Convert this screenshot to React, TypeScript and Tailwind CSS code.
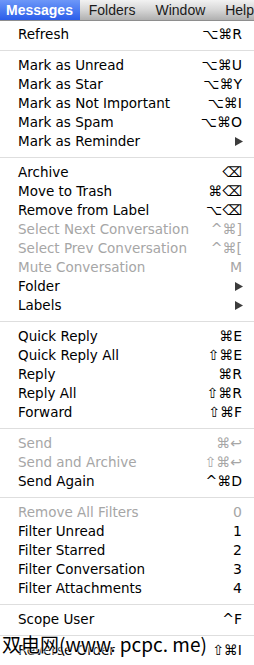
import React from "react";

type Item =
  | { sep: true }
  | { label: string; sc?: string; sub?: boolean; dis?: boolean; sep?: false };

const items: Item[] = [
  { label: "Refresh", sc: "⌥⌘R" },
  { sep: true },
  { label: "Mark as Unread", sc: "⌥⌘U" },
  { label: "Mark as Star", sc: "⌥⌘Y" },
  { label: "Mark as Not Important", sc: "⌥⌘I" },
  { label: "Mark as Spam", sc: "⌥⌘O" },
  { label: "Mark as Reminder", sub: true },
  { sep: true },
  { label: "Archive", sc: "⌫" },
  { label: "Move to Trash", sc: "⌘⌫" },
  { label: "Remove from Label", sc: "⌥⌫" },
  { label: "Select Next Conversation", sc: "^⌘]", dis: true },
  { label: "Select Prev Conversation", sc: "^⌘[", dis: true },
  { label: "Mute Conversation", sc: "M", dis: true },
  { label: "Folder", sub: true },
  { label: "Labels", sub: true },
  { sep: true },
  { label: "Quick Reply", sc: "⌘E" },
  { label: "Quick Reply All", sc: "⇧⌘E" },
  { label: "Reply", sc: "⌘R" },
  { label: "Reply All", sc: "⇧⌘R" },
  { label: "Forward", sc: "⇧⌘F" },
  { sep: true },
  { label: "Send", sc: "⌘↩", dis: true },
  { label: "Send and Archive", sc: "⇧⌘↩", dis: true },
  { label: "Send Again", sc: "^⌘D" },
  { sep: true },
  { label: "Remove All Filters", sc: "0", dis: true },
  { label: "Filter Unread", sc: "1" },
  { label: "Filter Starred", sc: "2" },
  { label: "Filter Conversation", sc: "3" },
  { label: "Filter Attachments", sc: "4" },
  { sep: true },
  { label: "Scope User", sc: "^F" },
  { sep: true },
  { label: "Reverse Order", sc: "⇧⌘I" },
];

export default function App() {
  return (
    <div
      className="relative w-[254px] h-[665px] overflow-hidden bg-white"
      style={{ fontFamily: '"DejaVu Sans", "Liberation Sans", sans-serif' }}
    >
      <div
        className="flex h-[21px] items-center bg-gradient-to-b from-[#f2f2f2] via-[#d6d6d6] to-[#b0b0b0] border-b border-[#8e8e8e] text-[14px] text-[#1a1a1a] whitespace-nowrap"
        style={{ fontFamily: '"Liberation Sans", Arial, sans-serif' }}
      >
        <div className="h-full flex items-center px-[6px] w-[81px] bg-gradient-to-b from-[#6d97f8] to-[#2b5ce9] text-white font-bold">
          Messages
        </div>
        <div className="pl-[9px] w-[77px]">Folders</div>
        <div className="w-[71px]">Window</div>
        <div>Help</div>
      </div>
      <div className="pt-[4px] text-[13.5px]">
        {items.map((it, i) =>
          it.sep ? (
            <div key={i} className="h-[12px] flex items-center">
              <div className="w-full h-px bg-[#dedede]" />
            </div>
          ) : (
            <div
              key={i}
              className={`h-[19px] flex items-center justify-between pl-[18px] pr-[10px] whitespace-nowrap ${
                it.dis ? "text-[#a6a6a6]" : "text-black"
              }`}
            >
              <span>{it.label}</span>
              {it.sub ? (
                <svg width="8" height="9" viewBox="0 0 8 9" className="mr-[1px]">
                  <polygon points="0,0 8,4.5 0,9" fill="#3c3c3c" />
                </svg>
              ) : (
                <span className="text-[14px] mr-[2px]">{it.sc}</span>
              )}
            </div>
          )
        )}
      </div>
      <div
        className="absolute left-[2px] top-[632px] text-[19px] leading-[24px] text-black whitespace-nowrap"
        style={{
          fontFamily: '"Noto Sans CJK SC", "DejaVu Sans", sans-serif',
          textShadow: "0 0 2px #fff, 0 0 2px #fff, 0 0 2px #fff",
        }}
      >
        双电网(www. pcpc. me)
      </div>
    </div>
  );
}
